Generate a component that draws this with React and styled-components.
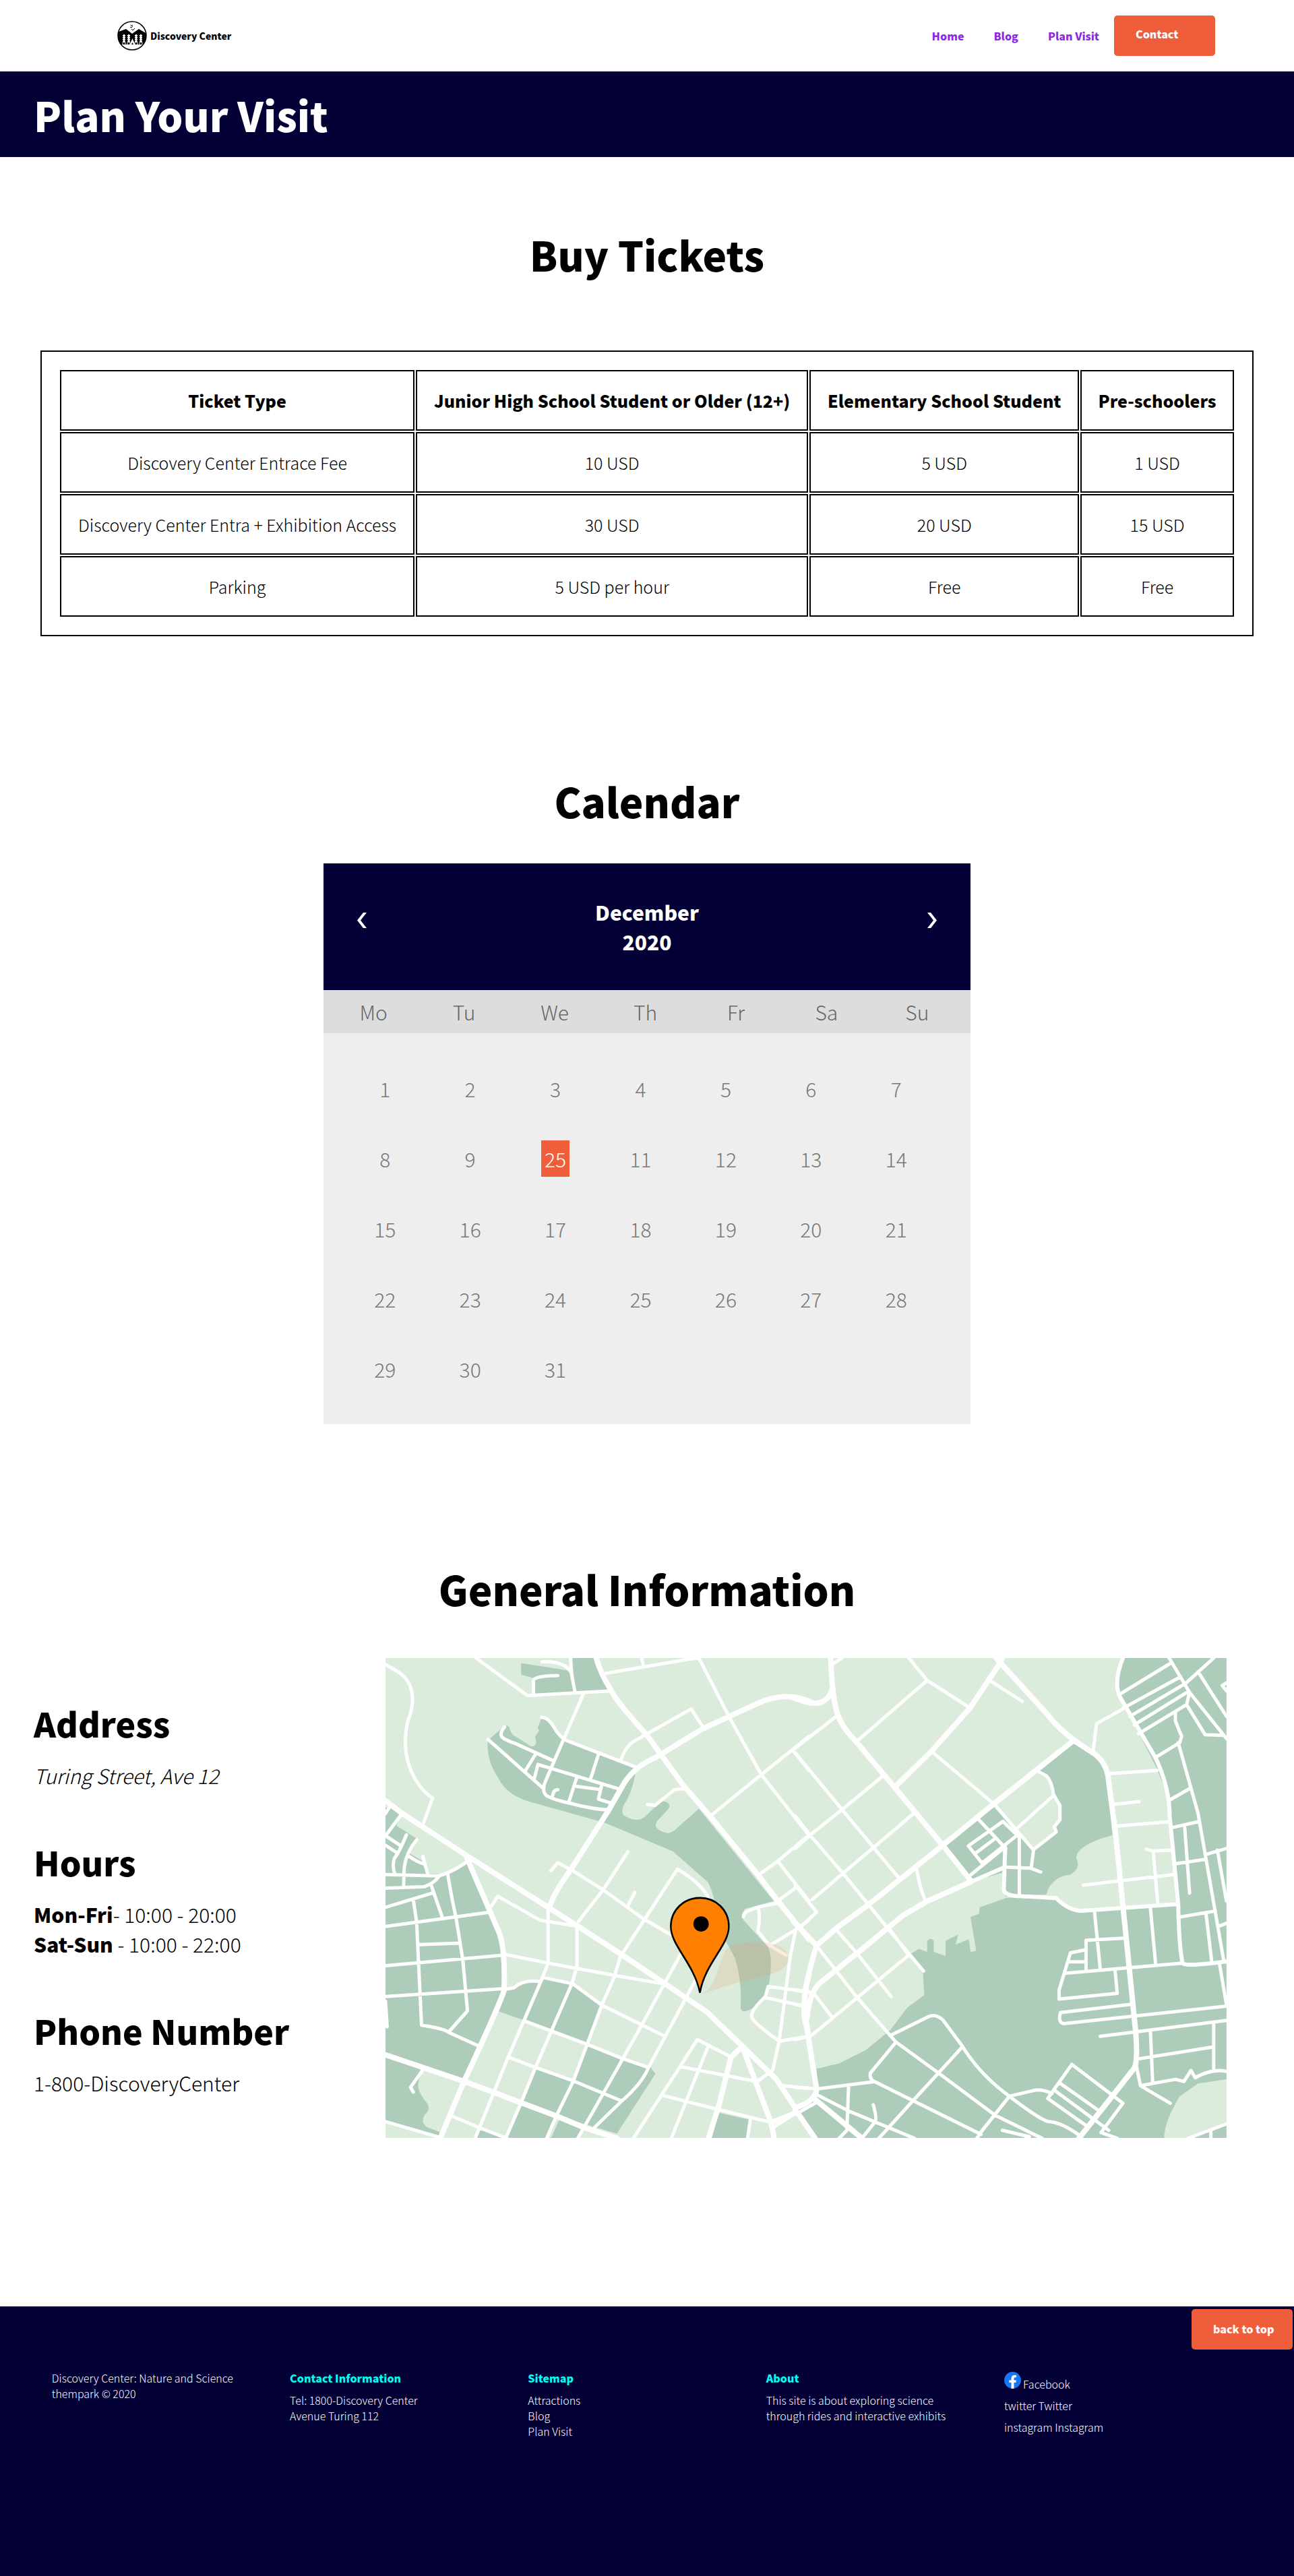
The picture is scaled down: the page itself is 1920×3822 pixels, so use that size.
import React from "react";
import styled, { createGlobalStyle, css } from "styled-components";

const navy = "#020035";
const orange = "#ee5e3a";
const fontStack = `"Noto Sans CJK JP", "Noto Sans CJK SC", "Noto Sans", sans-serif`;

const GlobalStyle = createGlobalStyle`
  * { box-sizing: border-box; }
  body {
    margin: 0;
    background: #fff;
    color: #000;
    font-family: ${fontStack};
    font-size: 16px;
    font-weight: 300;
    line-height: 23px;
  }
  h1, h2, h3, h4, p, ul { margin: 0; padding: 0; }
  ul { list-style: none; }
`;

const Header = styled.header`
  display: flex;
  align-items: center;
  justify-content: space-between;
  height: 106px;
  padding: 0 117px 0 174px;
`;

const Brand = styled.a`
  display: flex;
  align-items: center;
  gap: 5px;
  color: #000;
  font-size: 14px;
  font-weight: 900;
  text-decoration: none;
`;

const Nav = styled.nav`
  display: flex;
  align-items: center;
`;

const NavLink = styled.a`
  margin-right: ${(p) => (p.$last ? 22 : 44)}px;
  color: #8a2be2;
  font-weight: 900;
  text-decoration: none;
`;

const Button = styled.a`
  display: block;
  width: 150px;
  height: 60px;
  padding: ${(p) => (p.$raised ? 16 : 18)}px 32px;
  border-radius: 5px;
  background: ${orange};
  color: #fff;
  font-weight: 900;
  text-decoration: none;
  white-space: nowrap;
`;

const Hero = styled.div`
  padding: 20px 50px;
  background: ${navy};
  color: #fff;
`;

const bigTitle = css`
  font-size: 60px;
  line-height: 87px;
  font-weight: 900;
`;

const PageTitle = styled.h1`
  ${bigTitle}
`;

const SectionTitle = styled.h2`
  ${bigTitle}
  padding-top: ${(p) => (p.$first ? 100 : 200)}px;
  padding-bottom: ${(p) => p.$below}px;
  text-align: center;
`;

const Tickets = styled.table`
  width: calc(100% - 120px);
  margin: 0 auto;
  padding: 25px;
  border: 2px solid #000;
  border-spacing: 2px;
  font-size: 25px;
  line-height: 36px;
  text-align: center;
  white-space: nowrap;

  th,
  td {
    padding: 25px 24px;
    border: 2px solid #000;
  }
  th {
    font-weight: 900;
  }
`;

const Calendar = styled.div`
  width: 50%;
  margin: 0 auto;
  font-size: 30px;
  line-height: 44px;
  text-align: center;
  color: #777;
`;

const Month = styled.div`
  display: flex;
  justify-content: space-between;
  padding: 50px;
  background: ${navy};
  color: #fff;
  font-weight: 900;
`;

const ArrowButton = styled.button`
  align-self: flex-start;
  padding: 23px 0 0;
  border: 0;
  background: none;
  color: inherit;
  line-height: 0;
  cursor: pointer;
`;

const Weekdays = styled.ul`
  display: grid;
  grid-template-columns: repeat(7, 1fr);
  padding: 10px 12px 10px 7px;
  background: #ddd;
  color: #666;
`;

const Days = styled.ul`
  display: grid;
  grid-template-columns: repeat(7, 1fr);
  padding: 30px 47px 30px 28px;
  background: #eee;
`;

const Day = styled.li`
  padding: 30px 0;
`;

const Active = styled.span`
  display: inline-block;
  margin: -5px 0;
  padding: 5px;
  background: ${orange};
  color: #fff;
`;

const Info = styled.div`
  display: flex;
  align-items: center;
  justify-content: space-between;
  padding: 0 100px 250px 50px;
`;

const Facts = styled.div`
  display: flex;
  flex-direction: column;
  gap: 70px;
  font-size: 30px;
  line-height: 44px;
  white-space: nowrap;

  h3 {
    margin-bottom: 20px;
    font-size: 50px;
    line-height: 72px;
    font-weight: 900;
  }
  address {
    font-style: italic;
  }
  strong {
    font-weight: 900;
  }
`;

const MapSvg = styled.svg`
  display: block;
  width: 65vw;
  flex: none;
  height: auto;
  background: #dbebdc;
`;

const Area = styled.path`
  fill: #aeccba;
`;

const Road = styled.path`
  fill: none;
  stroke: #fdfefd;
  stroke-width: ${(p) => (p.$w ? p.$w : 5)}px;
  stroke-linecap: round;
  stroke-linejoin: round;
  vector-effect: non-scaling-stroke;
`;

const Footer = styled.footer`
  min-height: 400px;
  padding-top: 4px;
  background: ${navy};
  color: #fff;

  a {
    color: #fff;
    text-decoration: none;
  }
`;

const TopRow = styled.div`
  display: flex;
  justify-content: flex-end;
  padding-right: 2px;
`;

const FooterColumns = styled.div`
  display: grid;
  grid-template-columns: repeat(5, 1fr);
  padding: 31px 4% 0;
`;

const FooterColumn = styled.div`
  padding-right: 60px;

  h4 {
    margin-bottom: 10px;
    color: #00fff0;
    font-size: 16px;
    font-weight: 900;
  }
`;

const Social = styled.li`
  margin-bottom: 9px;

  svg {
    margin: 2px 3px 0 0;
    vertical-align: baseline;
  }
`;

const Logo = () => (
  <svg width="44" height="44" viewBox="0 0 44 44" aria-hidden="true">
    <clipPath id="badge">
      <circle cx="22" cy="22" r="21" />
    </clipPath>
    <g clipPath="url(#badge)">
      <path d="M0 17 13 12l9 7 10-7 12 7v16H0z" />
      <path
        d="M10 21v11M17 21v11M28 21v11M35 21v11"
        stroke="#fff"
        strokeWidth="4"
        strokeDasharray="2 1"
      />
      <path d="M10 20v11M17 20v11M28 20v11M35 20v11" stroke="#fff" strokeWidth="2" />
      <path d="M8 32v3M12 32v3M15 32v3M19 32v3M26 32v3M30 32v3M33 32v3M37 32v3" stroke="#fff" strokeWidth="1" />
      <path d="M22.500 26l-4 9h8z" fill="#fff" />
      <path d="M21 35l1.500-3 1.500 3z" />
      <path d="M0 35h44v9H0z" fill="#fff" />
    </g>
    <path
      d="M20 6l1 1.500 2-1.500M19 9l2 1 2-2M21 12l2 2 3-3"
      fill="none"
      stroke="#000"
      strokeWidth="1"
    />
    <circle cx="22" cy="22" r="21" fill="none" stroke="#000" strokeWidth="1.500" />
  </svg>
);

const Chevron = ({ flip }) => (
  <svg width="14" height="23" viewBox="0 0 14 23" aria-hidden="true">
    <path
      d={flip ? "M0 0h5l9 11.500-9 11.500H0l9-11.500z" : "M14 0H9L0 11.500 9 23h5L5 11.500z"}
      fill="#fff"
    />
  </svg>
);

const FacebookIcon = () => (
  <svg width="25" height="25" viewBox="0 0 24 24" aria-hidden="true">
    <circle cx="12" cy="12" r="12" fill="#1877f2" />
    <path
      d="M16.670 15.470 17.200 12h-3.330V9.750c0-.950.460-1.870 1.950-1.870h1.520V4.920s-1.380-.230-2.690-.230c-2.740 0-4.530 1.660-4.530 4.670V12H7.080v3.470h3.040V24h3.750v-8.530z"
      fill="#fff"
    />
  </svg>
);

const westAreas = [
  "M522 58 700 82 712 148 572 156V106L522 94Z",
  "M707 42H792Q805 90 840 142L720 148Z",
  "M402 300 462 255Q478 250 482 268 488 285 505 290L545 312Q560 326 574 314 580 305 572 290L588 270 582 262 597 228Q620 235 640 262 660 290 680 298L940 385Q935 440 905 490 880 520 895 536 940 560 970 542L1030 492Q1060 490 1062 508 1055 520 1018 552 995 582 1055 592 1075 590 1090 575L1168 515 1440 805 1335 830Q1320 850 1330 865L1420 950Q1430 970 1430 1000 1428 1060 1415 1095 1370 1150 1330 1152 1318 1150 1320 1130 1325 1060 1300 985L1240 890Q1230 790 1200 745L1075 650Q830 560 820 558L560 495Q470 475 440 420 400 370 400 315Z",
  "M29 512 48 514 85 535 68 568 145 610 115 655 165 680 178 720 255 718 325 682Q380 780 440 900 465 950 460 1085L435 1150 315 1365 29 1285Z",
  "M29 1290 165 1335Q145 1370 148 1390 152 1410 180 1440 195 1460 172 1475 155 1500 180 1515L230 1532 220 1550 29 1500Z",
  "M435 1150 535 1180 762 1250 815 1128 710 1065 602 1045 595 1058Q540 1050 495 1080L458 1085Z",
  "M762 1255 885 1298 990 1325 1010 1348 870 1535 790 1515 655 1480 520 1438 575 1328 712 1370Z",
  "M520 1440 650 1480 615 1550H470Z",
  "M368 1520 460 1550H352Z",
  "M662 1490 745 1518 728 1550H630Z",
  "M1240 1470 1355 1492 1345 1550H1215Z",
  "M1545 1475 1568 1465V1520Z",
];

const westMajor =
  "M29 490 90 530 320 660 620 825 730 885 885 972 1040 1062 1195 1152 1325 1260 1450 1365 1568 1520M795 42Q810 90 850 145 870 180 980 285L1110 440 1210 540 1385 725 1455 805 1568 925M320 660Q380 780 440 900 465 950 460 1085 450 1120 315 1370L228 1550M29 1288 310 1370 420 1405 520 1438 650 1480 750 1516 870 1550M625 825Q640 780 700 710L840 520 900 430Q940 380 1010 355L1180 265 1380 185Q1480 145 1570 178M1568 1040Q1550 1080 1553 1140 1560 1200 1568 1230M1325 1260 1430 1500 1442 1550M1325 1262 1285 1295 1240 1450 1203 1550M1430 1500Q1520 1475 1568 1445";

const westMinor =
  "M29 62 80 88Q130 120 127 180 125 210 110 240 90 320 115 380 140 445 200 482L168 558M358 42 545 160 850 145M567 155V112Q570 98 655 97M597 54Q680 50 704 88L717 145M704 88 702 42M748 156 676 298 610 430Q595 460 615 475 650 490 700 498 800 520 840 518M830 90 1130 46 1170 42M960 42 967 68M1168 42 1280 230 1395 408 1568 598M885 362Q905 310 950 295L1140 202 1188 265M1568 288 1395 408 1210 538M1510 332 1568 395M982 502 1008 505 1080 455 1115 452M597 228Q620 228 640 258 665 295 690 302L940 385M462 258Q440 282 455 292 465 300 500 310L640 365M402 298 603 452M575 343 538 395M570 420 583 376 885 455M803 345 775 420M725 415 695 495M725 445 810 455M815 440 803 485 850 498M636 475Q640 455 655 455M1568 598 1455 680 1390 720M1455 680 1568 805M1525 760 1455 805M630 710 655 685 710 710 820 770 965 860 1065 910M910 650 820 770 730 870M935 778 910 820M890 970 980 850 1090 705Q1170 745 1200 790M415 820 437 790 590 865 730 885M620 825V1000L600 1045 475 1295 355 1550M725 885V1010L707 1063 633 1211 576 1324 519 1444 466 1550M460 972 620 1000 870 1040 1040 1065M885 972 860 1045 815 1132 762 1255 712 1370 650 1480 615 1550M458 1083 495 1078Q530 1050 590 1058M600 1045 710 1065 815 1132 1045 1230M1100 975 960 1195 820 1410 728 1550M1155 1055 985 1328Q960 1380 885 1435L790 1515M535 1182 762 1255 885 1298 985 1328M475 1295 575 1328 712 1370 885 1432M270 1480 365 1515 470 1550M29 722 220 726Q260 720 325 682M29 765 170 760Q205 750 225 726M29 600 82 630M29 630 68 652M29 600 85 535M29 530 42 512M105 597Q80 650 62 670 52 690 62 718M143 612Q105 650 97 700L95 755M115 665Q160 690 172 688L182 718M165 665 172 688M29 825 200 780M29 885 410 840M195 755 235 855M255 720Q270 800 285 855L310 990 327 1150 260 1215M130 800 142 870 160 1195Q240 1205 260 1218L362 1258M150 942 300 937M29 1008 460 975M29 1105 460 1080M29 1120 35 1200M165 1335 120 1390 130 1405M29 1498 230 1548M930 1550 1100 1325 1162 1240 1285 1295M1200 1265 1165 1340 1068 1550M1100 1325 1380 1372 1430 1340M1035 1415 1240 1460 1430 1500M1355 1492 1345 1550M1330 855Q1325 830 1455 812M1385 828Q1392 870 1382 900L1425 945 1485 975M1425 945 1520 895 1500 980 1460 1245 1437 1335M1520 895 1568 865M1568 1090 1420 1073 1410 1105Q1355 1150 1360 1170 1370 1190 1460 1245L1568 1230M1410 1108 1568 1138M1470 1385 1568 1393M1440 1515 1568 1445";

const eastAreas = [
  "M745 795 800 792 920 798Q960 830 1010 835L1150 828 1345 815 1330 640 1320 490 1275 390 1210 275 1135 155Q1125 90 1155 42H1520V1365L1420 1378 1355 1418Q1300 1500 1300 1550H75L0 1470 78 1405 75 1332 155 1315 250 1272 335 1210 395 1140 455 1100 450 1030 400 975 435 955 465 965V930Q478 918 488 930V965L530 978V930L575 910 565 942 612 925 618 965 638 962 618 855 648 845 650 825Z",
  "M860 398 978 310 1050 345Q1095 380 1100 420L1118 598Q990 630 990 670 1010 700 970 722 900 730 885 785L740 790 735 715 620 745 530 630 700 508 790 600 840 645 920 590 912 570 932 545V500L910 470Q905 420 880 412Z",
  "M1395 1550 1520 1508V1550Z",
];

const eastMajor =
  "M-5 168 30 178Q110 200 130 140M125 42Q130 170 150 220 165 260 215 305L350 448 520 630 618 740M732 38 720 60 615 200 480 335 350 448M708 42 890 220Q940 280 1050 340 1100 370 1105 430L1130 600 1200 1215Q1208 1310 1195 1330L1120 1415 1000 1550M75 945 145 890 260 815 520 630 700 500 975 305M-5 870 75 945Q10 1130 40 1200L75 1395M42 1170Q50 1090 90 1060L230 960 380 850 460 808 618 745M0 1455Q80 1430 75 1390M70 1428 235 1550M0 1460 70 1550";

const eastMiddle =
  "M618 745 735 700M740 640 735 770Q740 790 800 790L920 796Q970 840 1020 835L1345 815M1155 42Q1120 120 1145 165L1270 355Q1320 450 1320 540L1350 815Q1352 940 1365 1000 1370 1012 1520 995";

const eastMinor =
  "M130 62 165 42M400 42 465 112 610 195M465 112 215 305M685 112 800 178M0 325 145 225M480 335 700 500 840 645M0 340 165 518 370 738M0 640 52 598 165 518 305 415M0 538 52 598 170 720 325 890 452 1025M60 800 415 532M0 755 75 840 20 885M428 705Q440 770 460 805M145 895 218 970 338 1105M0 1085 65 1095 130 1170M75 945 218 1108 355 1248 505 1345 705 1478 870 1550M60 1225 400 975M0 1130 40 1138M0 1240 50 1230M330 890 400 975M340 1225 470 1168Q495 1158 520 1178L590 1262Q650 1350 755 1418 860 1490 890 1497 940 1500 1000 1540M355 1248 265 1345Q260 1365 280 1372L415 1432 655 1538M0 1390 78 1395 280 1372M590 1262 505 1345 415 1432 295 1550M755 1418 655 1530 640 1550M755 1418 850 1398Q880 1398 905 1410M80 1415 190 1465 420 1550M188 1385 182 1525 155 1550M275 1445Q290 1490 280 1500L235 1550M0 1475 70 1440M730 1525 825 1545 815 1550M645 548 742 640M610 632 732 555 790 605V785M610 632 660 688M635 655 700 612M660 685 780 600M620 722 740 635M735 698 830 702 865 714M840 645 832 700M780 578 905 478M860 400 885 412Q905 430 910 470L933 505V550L913 572 920 588 845 640M975 1318 1155 1440 1078 1532 1135 1550M975 1318 890 1425 1025 1510M930 1375 1065 1460M915 1400 1105 1525M1050 335 1062 248 1155 202M1110 405 1275 395M1120 502 1212 493M1130 570 1320 556M1238 642 1260 648 1328 645M1262 650 1278 815M1015 755 1335 722M1145 155 1320 60M1155 200 1350 105M1180 225 1370 125M1195 252 1380 150M1210 280 1380 188 1388 155M1268 355 1355 308 1362 288 1340 240 1340 215M1318 42 1390 150 1520 295M1378 120 1475 42M1420 85 1520 225M1520 120 1505 128 1520 145M1382 192 1445 283 1510 285M1350 308 1420 530 1510 990M1320 488 1390 452M1325 575 1425 555M1340 688 1440 675M1373 575 1390 780M1450 658 1520 640M1488 645 1520 805M1358 855 1470 838M1448 845 1468 995M1490 885 1520 875M1252 828 1270 1000M1055 840 1075 1018M1155 922 1025 928V1020M1025 958 970 968 930 1085V1113L1135 1095 1127 1020M965 996H1025M950 1032 1170 1015 1365 1000M1180 1130 935 1155Q925 1185 945 1190L1520 1135M1495 1000 1520 1130M1075 1230 1520 1180M1252 1215 1260 1375M1215 1300 1475 1263M1475 1190V1335M1203 1325 1217 1385 1322 1440M1217 1385 1340 1365 1370 1372 1395 1337 1410 1360Q1470 1330 1520 1340M1385 1550 1520 1505M1465 1530V1550";

const CityMap = () => (
  <MapSvg viewBox="0 0 1248 712" role="img" aria-label="Map of the Discovery Center">
    <g transform="scale(.4082 .4725) translate(-29 -42)">
      {westAreas.map((d) => (
        <Area key={d} d={d} />
      ))}
      <Road d={westMinor} />
      <Road d={westMajor} $w={8} />
    </g>
    <g transform="translate(608 0) scale(.4209 .4725) translate(0 -42)">
      {eastAreas.map((d) => (
        <Area key={d} d={d} />
      ))}
      <Road d={eastMinor} />
      <Road d={eastMiddle} $w={6} />
      <Road d={eastMajor} $w={8} />
    </g>
    <g transform="scale(.4082 .4725) translate(-29 -42)">
      <path
        d="M1180 1098C1240 1065 1232 1000 1270 955 1330 920 1450 930 1482 960 1510 995 1480 1022 1430 1035 1350 1055 1290 1060 1180 1098Z"
        fill="#ec965a"
        fillOpacity=".18"
      />
      <path
        d="M1172 1093C1150 1000 1066 945 1066 885 1066 833 1114 795 1172 795S1277 833 1277 885C1277 945 1190 1000 1172 1093Z"
        fill="#ff8000"
        stroke="#000"
        strokeWidth="6"
      />
      <ellipse cx="1176" cy="877" rx="28" ry="24" />
    </g>
  </MapSvg>
);

const rows = [
  ["Discovery Center Entrace Fee", "10 USD", "5 USD", "1 USD"],
  ["Discovery Center Entra + Exhibition Access", "30 USD", "20 USD", "15 USD"],
  ["Parking", "5 USD per hour", "Free", "Free"],
];

const headings = [
  "Ticket Type",
  "Junior High School Student or Older (12+)",
  "Elementary School Student",
  "Pre-schoolers",
];

const days = Array.from({ length: 31 }, (_, i) => (i === 9 ? 25 : i + 1));

export default function App() {
  return (
    <>
      <GlobalStyle />
      <Header id="top">
        <Brand href="#top">
          <Logo />
          Discovery Center
        </Brand>
        <Nav>
          <NavLink href="#home">Home</NavLink>
          <NavLink href="#blog">Blog</NavLink>
          <NavLink href="#visit" $last>
            Plan Visit
          </NavLink>
          <Button href="#contact" $raised>
            Contact
          </Button>
        </Nav>
      </Header>
      <Hero>
        <PageTitle>Plan Your Visit</PageTitle>
      </Hero>
      <main>
        <SectionTitle $first $below={100}>
          Buy Tickets
        </SectionTitle>
        <Tickets>
          <thead>
            <tr>
              {headings.map((h) => (
                <th key={h} scope="col">
                  {h}
                </th>
              ))}
            </tr>
          </thead>
          <tbody>
            {rows.map((row) => (
              <tr key={row[0]}>
                {row.map((cell, i) => (
                  <td key={i}>{cell}</td>
                ))}
              </tr>
            ))}
          </tbody>
        </Tickets>

        <SectionTitle $below={50}>Calendar</SectionTitle>
        <Calendar>
          <Month>
            <ArrowButton type="button" aria-label="Previous month">
              <Chevron />
            </ArrowButton>
            <div>
              December
              <br />
              2020
            </div>
            <ArrowButton type="button" aria-label="Next month">
              <Chevron flip />
            </ArrowButton>
          </Month>
          <Weekdays>
            {["Mo", "Tu", "We", "Th", "Fr", "Sa", "Su"].map((d) => (
              <li key={d}>{d}</li>
            ))}
          </Weekdays>
          <Days>
            {days.map((d, i) => (
              <Day key={i}>{i === 9 ? <Active>{d}</Active> : d}</Day>
            ))}
          </Days>
        </Calendar>

        <SectionTitle $below={60}>General Information</SectionTitle>
        <Info>
          <Facts>
            <div>
              <h3>Address</h3>
              <address>Turing Street, Ave 12</address>
            </div>
            <div>
              <h3>Hours</h3>
              <p>
                <strong>Mon-Fri</strong>- 10:00 - 20:00
              </p>
              <p>
                <strong>Sat-Sun</strong> - 10:00 - 22:00
              </p>
            </div>
            <div>
              <h3>Phone Number</h3>
              <p>1-800-DiscoveryCenter</p>
            </div>
          </Facts>
          <CityMap />
        </Info>
      </main>
      <Footer>
        <TopRow>
          <Button href="#top">back to top</Button>
        </TopRow>
        <FooterColumns>
          <FooterColumn>
            <p>Discovery Center: Nature and Science thempark © 2020</p>
          </FooterColumn>
          <FooterColumn>
            <h4>Contact Information</h4>
            <p>Tel: 1800-Discovery Center</p>
            <p>Avenue Turing 112</p>
          </FooterColumn>
          <FooterColumn>
            <h4>Sitemap</h4>
            <ul>
              <li>
                <a href="#attractions">Attractions</a>
              </li>
              <li>
                <a href="#blog">Blog</a>
              </li>
              <li>
                <a href="#visit">Plan Visit</a>
              </li>
            </ul>
          </FooterColumn>
          <FooterColumn>
            <h4>About</h4>
            <p>This site is about exploring science through rides and interactive exhibits</p>
          </FooterColumn>
          <FooterColumn>
            <ul>
              <Social>
                <a href="#facebook">
                  <FacebookIcon />
                  Facebook
                </a>
              </Social>
              <Social>
                <a href="#twitter">twitter Twitter</a>
              </Social>
              <Social>
                <a href="#instagram">instagram Instagram</a>
              </Social>
            </ul>
          </FooterColumn>
        </FooterColumns>
      </Footer>
    </>
  );
}
